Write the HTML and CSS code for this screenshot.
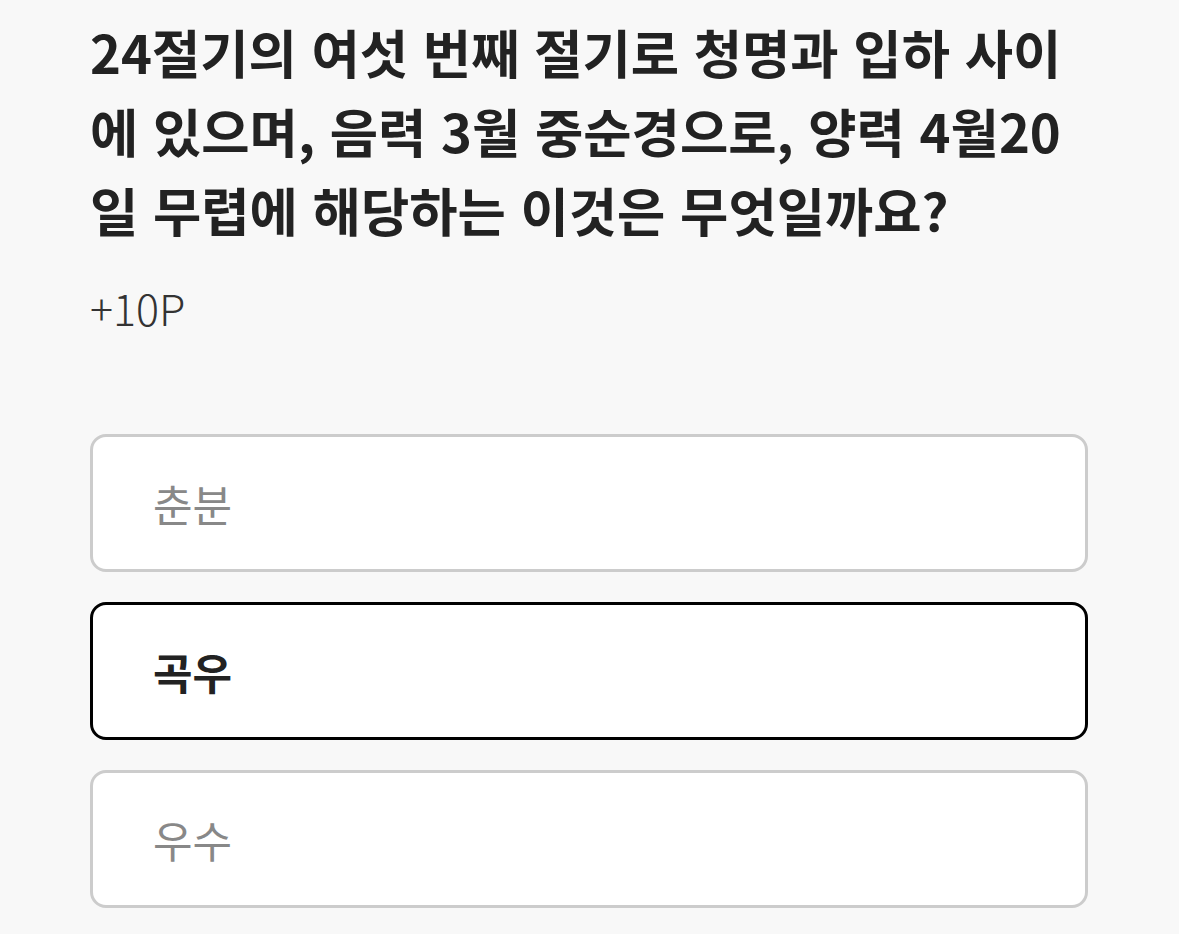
FILE: index.html
```html
<!DOCTYPE html>
<html lang="ko">
<head>
<meta charset="utf-8">
<link rel="stylesheet" href="styles.css">
</head>
<body>
<main class="page">
  <h1 class="question">24절기의 여섯 번째 절기로 청명과 입하 사이에 있으며, 음력 3월 중순경으로, 양력 4월20일 무렵에 해당하는 이것은 무엇일까요?</h1>
  <div class="point">+10P</div>
  <div class="options">
    <div class="option">춘분</div>
    <div class="option selected">곡우</div>
    <div class="option">우수</div>
  </div>
</main>
</body>
</html>
```

FILE: styles.css
```css
html, body {
  margin: 0;
  padding: 0;
  background: #f8f8f8;
}
body {
  font-family: "Noto Sans CJK KR", "Noto Sans", sans-serif;
  color: #222;
}
.page {
  padding: 12px 91px 0 90px;
}
.question {
  margin: 0;
  font-size: 52.5px;
  line-height: 79px;
  font-weight: 700;
  color: #222;
  word-break: break-all;
}
.point {
  margin-top: 28px;
  font-size: 43px;
  line-height: 60px;
  font-weight: 300;
  color: #333;
}
.options {
  margin-top: 97px;
  display: flex;
  flex-direction: column;
  gap: 30px;
}
.option {
  box-sizing: border-box;
  height: 138px;
  border: 3px solid #cccccc;
  border-radius: 16px;
  background: #fff;
  padding-left: 60px;
  display: flex;
  align-items: center;
  font-size: 43px;
  font-weight: 400;
  color: #888;
}
.option.selected {
  border-color: #000;
  color: #222;
  font-weight: 700;
}
```
